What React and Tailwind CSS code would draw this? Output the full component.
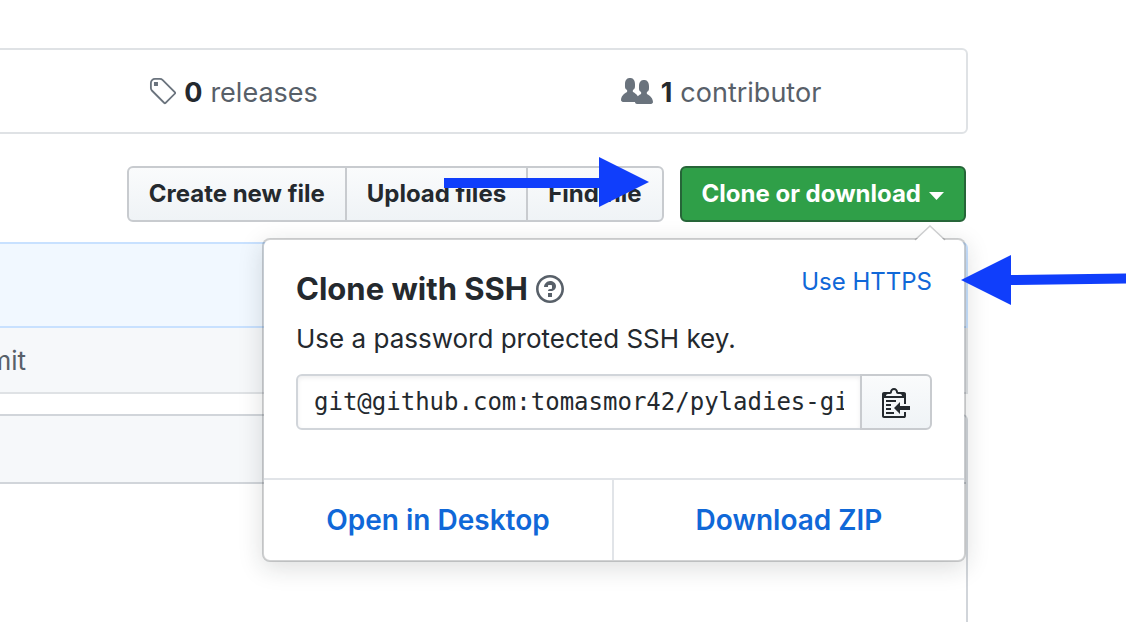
import React from "react";

const TAG =
  "M7.685 1.72a2.49 2.49 0 0 0-1.76-.726H3.48A2.5 2.5 0 0 0 .994 3.48v2.456c0 .656.269 1.292.726 1.76l6.024 6.024a.99.99 0 0 0 1.402 0l4.563-4.563a.99.99 0 0 0 0-1.402L7.685 1.72zM2.366 7.048A1.54 1.54 0 0 1 1.9 5.925V3.48c0-.874.716-1.58 1.58-1.58h2.456c.418 0 .825.159 1.123.467l6.104 6.094-4.702 4.702-6.094-6.114zm.626-4.066h1.989v1.989H2.982V2.982h.01z";
const PEOPLE =
  "M16 12.999c0 .439-.45 1-1 1H7.995c-.539 0-.994-.447-.995-.999H1c-.54 0-1-.561-1-1 0-2.634 3-4 3-4s.229-.409 0-1c-.841-.621-1.058-.59-1-3 .058-2.419 1.367-3 2.5-3s2.442.58 2.5 3c.058 2.41-.159 2.379-1 3-.229.59 0 1 0 1s1.549.711 2.42 2.088C9.196 9.369 10 8.999 10 8.999s.229-.409 0-1c-.841-.62-1.058-.59-1-3 .058-2.419 1.367-3 2.5-3s2.437.581 2.495 3c.059 2.41-.158 2.38-1 3-.229.59 0 1 0 1s3.005 1.366 3.005 4";
const QUESTION =
  "M6 10h2v2H6v-2zm4-3.5C10 8.64 8 9 8 9H6c0-.55.45-1 1-1h.5c.28 0 .5-.22.5-.5v-1c0-.28-.22-.5-.5-.5h-1c-.28 0-.5.22-.5.5V7H4c0-1.5 1.5-3 3-3s3 1 3 2.5zM7 2.3c3.14 0 5.7 2.56 5.7 5.7s-2.56 5.7-5.7 5.7A5.71 5.71 0 0 1 1.3 8c0-3.14 2.56-5.7 5.7-5.7zM7 1C3.14 1 0 4.14 0 8s3.14 7 7 7 7-3.14 7-7-3.14-7-7-7z";
const CLIPPY =
  "M2 13h4v1H2v-1zm5-6H2v1h5V7zm2 3V8l-3 3 3 3v-2h5v-2H9zM4.5 9H2v1h2.5V9zM2 12h2.5v-1H2v1zm9 1h1v2c-.02.28-.11.52-.3.7-.19.18-.42.28-.7.3H1c-.55 0-1-.45-1-1V4c0-.55.45-1 1-1h3c0-1.11.89-2 2-2 1.11 0 2 .89 2 2h3c.55 0 1 .45 1 1v5h-1V6H1v9h10v-2zM2 5h8c0-.55-.45-1-1-1H8c-.55 0-1-.45-1-1s-.45-1-1-1-1 .45-1 1-.45 1-1 1H3c-.55 0-1 .45-1 1z";

function Octicon({ d, wide, className }) {
  return (
    <svg
      viewBox={wide ? "0 0 16 16" : "0 0 14 16"}
      width={wide ? 32 : 28}
      height={32}
      fill="currentColor"
      aria-hidden="true"
      className={className}
    >
      <path fillRule="evenodd" d={d} />
    </svg>
  );
}

function Stat({ icon, wide, count, label }) {
  return (
    <a href="#" className="flex items-start justify-center text-[27px] leading-[42px] text-[#586069]">
      <Octicon d={icon} wide={wide} className="mt-1 mr-2 text-[#6a737d]" />
      <span className="font-bold text-[#24292e]">{count}</span>
      <span className="mr-[2px] ml-2">{label}</span>
    </a>
  );
}

function ToolButton({ children }) {
  return (
    <button
      type="button"
      className="-ml-[2px] border-2 border-[#c8cbcf] bg-linear-to-b from-[#fafbfc] to-[#eff3f6] px-5 py-2 first:ml-0 first:rounded-l-md last:rounded-r-md"
    >
      {children}
    </button>
  );
}

function ClonePopover() {
  return (
    <div className="absolute top-[72px] right-0 z-10 w-[704px] rounded-lg border-2 border-[#1b1f23]/20 bg-white bg-clip-padding font-normal text-[#24292e] shadow-[0_6px_24px_rgba(27,31,35,0.15)]">
      <svg
        className="absolute -top-[15px] right-[17px]"
        width="34"
        height="17"
        viewBox="0 0 34 17"
        aria-hidden="true"
      >
        <path d="M1 17 17 1 33 17Z" fill="#fff" />
        <path d="M2 15 17 1 32 15" fill="none" stroke="#1b1f23" strokeOpacity=".2" strokeWidth="1.5" />
      </svg>

      <div className="px-8 pt-[27px] pb-12">
        <div className="flex items-start justify-between">
          <h2 className="flex items-center text-[31px] leading-[44px] font-bold">
            Clone with SSH
            <a href="#" aria-label="Which remote URL should I use?" className="ml-2 text-[#586069]">
              <Octicon d={QUESTION} />
            </a>
          </h2>
          <button type="button" className="text-[24px] leading-[30px] text-[#1068d8]">
            Use HTTPS
          </button>
        </div>
        <p className="mt-2 text-[26px] leading-10">Use a password protected SSH key.</p>
        <div className="mt-[15px] flex h-14">
          <input
            type="text"
            readOnly
            aria-label="Clone this repository"
            defaultValue="git@github.com:tomasmor42/pyladies-git.git"
            className="-mr-[2px] min-w-0 flex-1 rounded-l-md border-2 border-[#d1d5da] bg-white px-4 font-['DejaVu_Sans_Mono',monospace] text-[24px] shadow-[inset_0_2px_4px_rgba(27,31,35,0.075)] outline-none"
          />
          <button
            type="button"
            aria-label="Copy to clipboard"
            className="flex w-[72px] items-center justify-center rounded-r-md border-2 border-[#c8cbcf] bg-linear-to-b from-[#fafbfc] to-[#eff3f6]"
          >
            <Octicon d={CLIPPY} />
          </button>
        </div>
      </div>

      <div className="grid grid-cols-2 border-t-2 border-[#e1e4e8] text-center text-[28px] leading-10 font-semibold text-[#1068d8]">
        <a href="#" className="border-r-2 border-[#e1e4e8] py-5">
          Open in Desktop
        </a>
        <a href="#" className="py-5">
          Download ZIP
        </a>
      </div>

      <svg
        className="absolute top-[13px] -right-[162px]"
        width="166"
        height="52"
        viewBox="0 0 166 52"
        aria-hidden="true"
      >
        <path d="M1 27 51 2V22L166 20.500V30.500L51 32V52Z" fill="#103efb" />
      </svg>
    </div>
  );
}

export default function App() {
  return (
    <div className="min-h-screen overflow-hidden bg-white font-[Inter,sans-serif]">
      <main className="-ml-3 mr-[174px] flex min-h-screen flex-col pt-12">
        <div className="grid grid-cols-2 rounded-md border-2 border-[#dfe2e5] pt-[22px] pb-[18px]">
          <Stat icon={TAG} count="0" label="releases" />
          <Stat icon={PEOPLE} wide count="1" label="contributor" />
        </div>

        <div className="relative mt-8 mr-[2px] flex justify-end gap-4 text-[24px] leading-9 font-bold text-[#24292e]">
          <div className="relative flex">
            <div className="flex">
              <ToolButton>Create new file</ToolButton>
              <ToolButton>Upload files</ToolButton>
              <ToolButton>Find file</ToolButton>
            </div>
            <svg
              className="absolute -top-[10px] right-[15px]"
              width="205"
              height="52"
              viewBox="0 0 205 52"
              aria-hidden="true"
            >
              <path d="M0 22H155V1L205 26 155 51V32H0Z" fill="#103efb" />
            </svg>
          </div>
          <button
            type="button"
            aria-expanded="true"
            className="flex items-center rounded-md border-2 border-[#266538] bg-[#2f9f48] px-5 py-2 text-white"
          >
            Clone or download
            <svg width="15" height="8" viewBox="0 0 15 8" className="mt-1 ml-2" aria-hidden="true">
              <path d="M0 0H15L7.500 8Z" fill="currentColor" />
            </svg>
          </button>
          <ClonePopover />
        </div>

        <section className="mt-5">
          <div className="h-[86px] rounded-t-md border-2 border-[#c8e1ff] bg-[#f1f8ff]" />
          <div className="border-2 border-t-0 border-[#dfe2e5] bg-[#f6f8fa] pt-3 pb-[10px] pl-[10px]">
            <div className="flex w-[26px] justify-end overflow-hidden text-[26px] leading-[42px] whitespace-nowrap text-[#586069]">
              <span>commit</span>
            </div>
          </div>
        </section>

        <section className="mt-5 flex-1 rounded-t-md border-2 border-b-0 border-[#d1d5da]">
          <div className="h-[68px] rounded-t-sm border-b-2 border-[#d1d5da] bg-[#f6f8fa]" />
        </section>
      </main>
    </div>
  );
}
